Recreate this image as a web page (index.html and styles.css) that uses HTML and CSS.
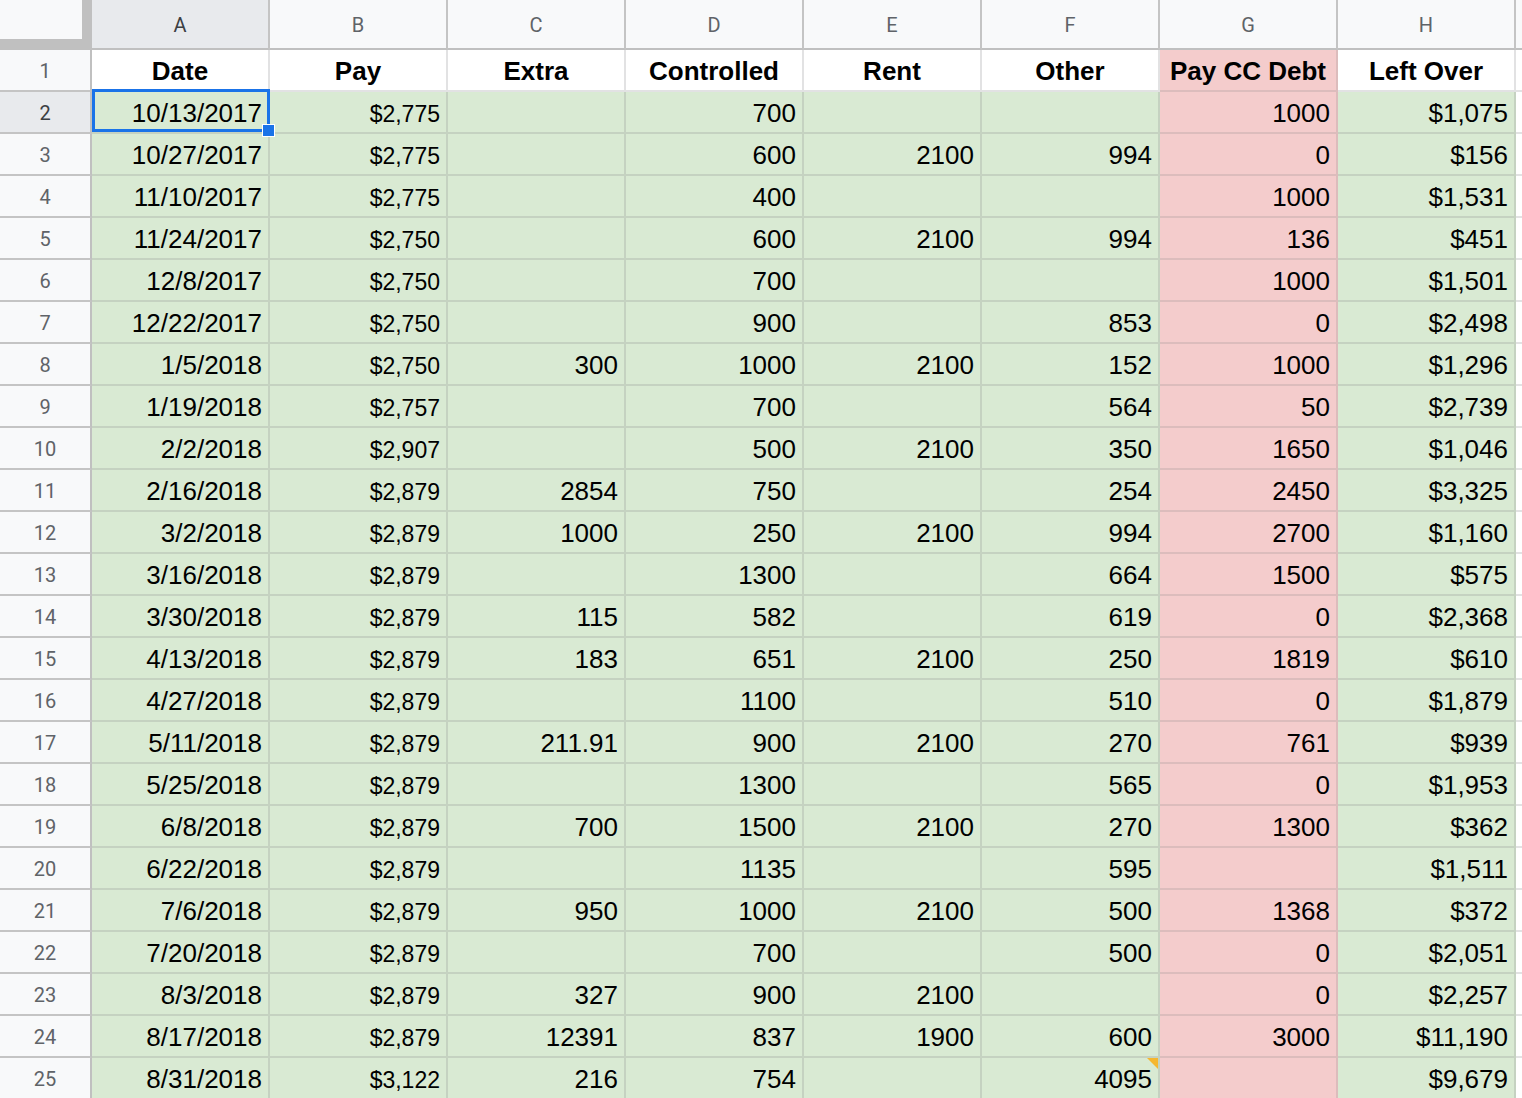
FILE: index.html
```html
<!DOCTYPE html>
<html>
<head>
<meta charset="utf-8">
<link rel="stylesheet" href="styles.css">
</head>
<body>
<div class="sheet">
  <div class="corner"></div>
  <div class="ch sel">A</div><div class="ch">B</div><div class="ch">C</div><div class="ch">D</div><div class="ch">E</div><div class="ch">F</div><div class="ch">G</div><div class="ch">H</div><div class="ch last"></div>

  <div class="rh">1</div>
  <div class="c w b">Date</div><div class="c w b">Pay</div><div class="c w b">Extra</div><div class="c w b">Controlled</div><div class="c w b">Rent</div><div class="c w b">Other</div><div class="c r b">Pay CC Debt</div><div class="c w b">Left Over</div><div class="c w"></div>

  <div class="rh sel">2</div>
  <div class="c g">10/13/2017</div><div class="c g p">$2,775</div><div class="c g"></div><div class="c g">700</div><div class="c g"></div><div class="c g"></div><div class="c r">1000</div><div class="c g">$1,075</div><div class="c w"></div>

  <div class="rh">3</div>
  <div class="c g">10/27/2017</div><div class="c g p">$2,775</div><div class="c g"></div><div class="c g">600</div><div class="c g">2100</div><div class="c g">994</div><div class="c r">0</div><div class="c g">$156</div><div class="c w"></div>

  <div class="rh">4</div>
  <div class="c g">11/10/2017</div><div class="c g p">$2,775</div><div class="c g"></div><div class="c g">400</div><div class="c g"></div><div class="c g"></div><div class="c r">1000</div><div class="c g">$1,531</div><div class="c w"></div>

  <div class="rh">5</div>
  <div class="c g">11/24/2017</div><div class="c g p">$2,750</div><div class="c g"></div><div class="c g">600</div><div class="c g">2100</div><div class="c g">994</div><div class="c r">136</div><div class="c g">$451</div><div class="c w"></div>

  <div class="rh">6</div>
  <div class="c g">12/8/2017</div><div class="c g p">$2,750</div><div class="c g"></div><div class="c g">700</div><div class="c g"></div><div class="c g"></div><div class="c r">1000</div><div class="c g">$1,501</div><div class="c w"></div>

  <div class="rh">7</div>
  <div class="c g">12/22/2017</div><div class="c g p">$2,750</div><div class="c g"></div><div class="c g">900</div><div class="c g"></div><div class="c g">853</div><div class="c r">0</div><div class="c g">$2,498</div><div class="c w"></div>

  <div class="rh">8</div>
  <div class="c g">1/5/2018</div><div class="c g p">$2,750</div><div class="c g">300</div><div class="c g">1000</div><div class="c g">2100</div><div class="c g">152</div><div class="c r">1000</div><div class="c g">$1,296</div><div class="c w"></div>

  <div class="rh">9</div>
  <div class="c g">1/19/2018</div><div class="c g p">$2,757</div><div class="c g"></div><div class="c g">700</div><div class="c g"></div><div class="c g">564</div><div class="c r">50</div><div class="c g">$2,739</div><div class="c w"></div>

  <div class="rh">10</div>
  <div class="c g">2/2/2018</div><div class="c g p">$2,907</div><div class="c g"></div><div class="c g">500</div><div class="c g">2100</div><div class="c g">350</div><div class="c r">1650</div><div class="c g">$1,046</div><div class="c w"></div>

  <div class="rh">11</div>
  <div class="c g">2/16/2018</div><div class="c g p">$2,879</div><div class="c g">2854</div><div class="c g">750</div><div class="c g"></div><div class="c g">254</div><div class="c r">2450</div><div class="c g">$3,325</div><div class="c w"></div>

  <div class="rh">12</div>
  <div class="c g">3/2/2018</div><div class="c g p">$2,879</div><div class="c g">1000</div><div class="c g">250</div><div class="c g">2100</div><div class="c g">994</div><div class="c r">2700</div><div class="c g">$1,160</div><div class="c w"></div>

  <div class="rh">13</div>
  <div class="c g">3/16/2018</div><div class="c g p">$2,879</div><div class="c g"></div><div class="c g">1300</div><div class="c g"></div><div class="c g">664</div><div class="c r">1500</div><div class="c g">$575</div><div class="c w"></div>

  <div class="rh">14</div>
  <div class="c g">3/30/2018</div><div class="c g p">$2,879</div><div class="c g">115</div><div class="c g">582</div><div class="c g"></div><div class="c g">619</div><div class="c r">0</div><div class="c g">$2,368</div><div class="c w"></div>

  <div class="rh">15</div>
  <div class="c g">4/13/2018</div><div class="c g p">$2,879</div><div class="c g">183</div><div class="c g">651</div><div class="c g">2100</div><div class="c g">250</div><div class="c r">1819</div><div class="c g">$610</div><div class="c w"></div>

  <div class="rh">16</div>
  <div class="c g">4/27/2018</div><div class="c g p">$2,879</div><div class="c g"></div><div class="c g">1100</div><div class="c g"></div><div class="c g">510</div><div class="c r">0</div><div class="c g">$1,879</div><div class="c w"></div>

  <div class="rh">17</div>
  <div class="c g">5/11/2018</div><div class="c g p">$2,879</div><div class="c g">211.91</div><div class="c g">900</div><div class="c g">2100</div><div class="c g">270</div><div class="c r">761</div><div class="c g">$939</div><div class="c w"></div>

  <div class="rh">18</div>
  <div class="c g">5/25/2018</div><div class="c g p">$2,879</div><div class="c g"></div><div class="c g">1300</div><div class="c g"></div><div class="c g">565</div><div class="c r">0</div><div class="c g">$1,953</div><div class="c w"></div>

  <div class="rh">19</div>
  <div class="c g">6/8/2018</div><div class="c g p">$2,879</div><div class="c g">700</div><div class="c g">1500</div><div class="c g">2100</div><div class="c g">270</div><div class="c r">1300</div><div class="c g">$362</div><div class="c w"></div>

  <div class="rh">20</div>
  <div class="c g">6/22/2018</div><div class="c g p">$2,879</div><div class="c g"></div><div class="c g">1135</div><div class="c g"></div><div class="c g">595</div><div class="c r"></div><div class="c g">$1,511</div><div class="c w"></div>

  <div class="rh">21</div>
  <div class="c g">7/6/2018</div><div class="c g p">$2,879</div><div class="c g">950</div><div class="c g">1000</div><div class="c g">2100</div><div class="c g">500</div><div class="c r">1368</div><div class="c g">$372</div><div class="c w"></div>

  <div class="rh">22</div>
  <div class="c g">7/20/2018</div><div class="c g p">$2,879</div><div class="c g"></div><div class="c g">700</div><div class="c g"></div><div class="c g">500</div><div class="c r">0</div><div class="c g">$2,051</div><div class="c w"></div>

  <div class="rh">23</div>
  <div class="c g">8/3/2018</div><div class="c g p">$2,879</div><div class="c g">327</div><div class="c g">900</div><div class="c g">2100</div><div class="c g"></div><div class="c r">0</div><div class="c g">$2,257</div><div class="c w"></div>

  <div class="rh">24</div>
  <div class="c g">8/17/2018</div><div class="c g p">$2,879</div><div class="c g">12391</div><div class="c g">837</div><div class="c g">1900</div><div class="c g">600</div><div class="c r">3000</div><div class="c g">$11,190</div><div class="c w"></div>

  <div class="rh">25</div>
  <div class="c g">8/31/2018</div><div class="c g p">$3,122</div><div class="c g">216</div><div class="c g">754</div><div class="c g"></div><div class="c g note">4095</div><div class="c r"></div><div class="c g">$9,679</div><div class="c w"></div>

  <div class="selection"><span class="handle"></span></div>
</div>
</body>
</html>
```

FILE: styles.css
```css
* { box-sizing: border-box; }
html, body { margin: 0; padding: 0; background: #ffffff; overflow: hidden; }

.sheet {
  position: relative;
  display: grid;
  grid-template-columns: 92px repeat(8, 178px) 1fr;
  grid-template-rows: 50px;
  grid-auto-rows: 42px;
  width: 1522px;
}

.corner {
  background: #f8f9fa;
  border-right: 2px solid #c0c0c0;
  border-bottom: 2px solid #c0c0c0;
  box-shadow: inset -8px -9px 0 #c0c0c0;
}

.ch {
  background: #f8f9fa;
  border-right: 2px solid #c4c4c4;
  border-bottom: 2px solid #c0c0c0;
  display: flex;
  align-items: center;
  justify-content: center;
  padding-top: 2px;
  font-family: Roboto, "Liberation Sans", sans-serif;
  font-size: 20px;
  color: #5f6368;
}
.ch.last { border-right: none; }

.rh {
  background: #f8f9fa;
  border-right: 2px solid #c0c0c0;
  border-bottom: 2px solid #c4c4c4;
  display: flex;
  align-items: center;
  justify-content: center;
  padding-top: 2px;
  font-family: Roboto, "Liberation Sans", sans-serif;
  font-size: 20px;
  color: #5f6368;
}

.sel { background: #e8eaed; color: #3c4043; }

.c {
  position: relative;
  display: flex;
  align-items: flex-end;
  justify-content: flex-end;
  padding: 0 6px 6px 6px;
  font-family: "Liberation Sans", Arial, sans-serif;
  font-size: 26px;
  line-height: 26px;
  color: #000000;
  white-space: nowrap;
  border-right: 2px solid #e2e2e3;
  border-bottom: 2px solid #e2e2e3;
}

.c.p { font-size: 23px; line-height: 23px; padding-bottom: 6px; }

.c.w { background: #ffffff; }
.c.g { background: #d9ead3; border-color: #c5d2c1; }
.c.r { background: #f4cccc; border-color: #dcbcbc; }

.c.b {
  justify-content: center;
  font-weight: bold;
  padding-bottom: 6px;
}

.note::after {
  content: "";
  position: absolute;
  top: 0;
  right: 0;
  border-style: solid;
  border-width: 0 11px 11px 0;
  border-color: transparent #f5b730 transparent transparent;
}

.selection {
  position: absolute;
  left: 92px;
  top: 89px;
  width: 178px;
  height: 43px;
  border: 3px solid #1a73e8;
  pointer-events: none;
}

.handle {
  position: absolute;
  right: -8px;
  bottom: -8px;
  width: 13px;
  height: 13px;
  background: #1a73e8;
  border: 1px solid #ffffff;
}
```
